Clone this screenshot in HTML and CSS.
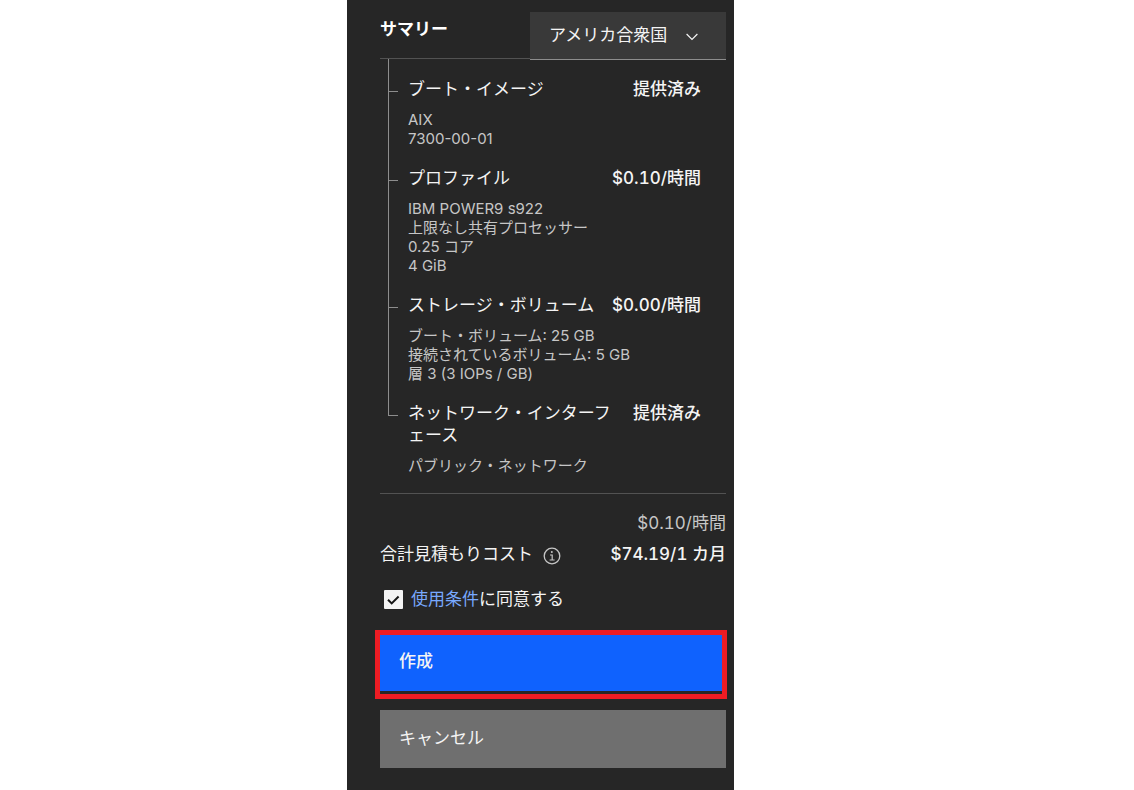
FILE: index.html
```
<!DOCTYPE html>
<html lang="ja">
<head>
<meta charset="utf-8">
<meta name="viewport" content="width=device-width, initial-scale=1">
<title>サマリー</title>
<link rel="stylesheet" href="styles.css">
</head>
<body>
<aside class="summary">
  <header class="summary-header">
    <h1 class="summary-title">サマリー</h1>
    <div class="region">
      <select class="region-select" aria-label="国">
        <option>アメリカ合衆国</option>
      </select>
      <svg class="region-chevron" viewBox="0 0 12 8" aria-hidden="true"><path d="M.6 1 6 6.4 11.4 1" fill="none" stroke="currentColor" stroke-width="1.2"/></svg>
    </div>
  </header>

  <ul class="tree">
    <li class="item">
      <span class="rail"></span>
      <div class="item-body">
        <div class="item-head"><h2 class="item-name">ブート・イメージ</h2><span class="item-price">提供済み</span></div>
        <p class="detail">AIX</p>
        <p class="detail">7300-00-01</p>
      </div>
    </li>
    <li class="item">
      <span class="rail"></span>
      <div class="item-body">
        <div class="item-head"><h2 class="item-name">プロファイル</h2><span class="item-price">$0.10/時間</span></div>
        <p class="detail">IBM POWER9 s922</p>
        <p class="detail">上限なし共有プロセッサー</p>
        <p class="detail">0.25 コア</p>
        <p class="detail">4 GiB</p>
      </div>
    </li>
    <li class="item">
      <span class="rail"></span>
      <div class="item-body">
        <div class="item-head"><h2 class="item-name">ストレージ・ボリューム</h2><span class="item-price">$0.00/時間</span></div>
        <p class="detail">ブート・ボリューム: 25 GB</p>
        <p class="detail">接続されているボリューム: 5 GB</p>
        <p class="detail">層 3 (3 IOPs / GB)</p>
      </div>
    </li>
    <li class="item">
      <span class="rail"></span>
      <div class="item-body">
        <div class="item-head"><h2 class="item-name">ネットワーク・インターフェース</h2><span class="item-price">提供済み</span></div>
        <p class="detail">パブリック・ネットワーク</p>
      </div>
    </li>
  </ul>

  <section class="total">
    <p class="hourly">$0.10/時間</p>
    <div class="total-row">
      <span>合計見積もりコスト</span>
      <button class="info" type="button" aria-label="詳細">
        <svg class="info-icon" viewBox="0 0 18 18" aria-hidden="true"><circle cx="9" cy="9" r="7.8" fill="none" stroke="currentColor" stroke-width="1.3"/><circle cx="8.8" cy="5" r="1" fill="currentColor"/><path d="M7 8h2.2v5M6.6 13h5" fill="none" stroke="currentColor" stroke-width="1.2"/></svg>
      </button>
      <strong class="monthly">$74.19/1 カ月</strong>
    </div>
  </section>

  <div class="terms">
    <input class="terms-box" type="checkbox" id="agree" checked>
    <label for="agree"><a class="terms-link" href="#terms">使用条件</a>に同意する</label>
  </div>

  <div class="highlight"><button class="button primary" type="button">作成</button></div>
  <button class="button secondary" type="button">キャンセル</button>
</aside>
</body>
</html>
```
FILE: styles.css
```
* {
  box-sizing: border-box;
}

body {
  margin: 0;
  background: #fff;
  font-family: Inter, "Noto Sans CJK JP", sans-serif;
  font-size: 17px;
  line-height: 22px;
}

h1, h2, p, ul {
  margin: 0;
  padding: 0;
  font-size: inherit;
}

button, select {
  border: 0;
  border-radius: 0;
  font: inherit;
  color: inherit;
}

.summary {
  max-width: 387px;
  min-height: 100vh;
  margin-left: 347px;
  padding: 12px 8px 22px 33px;
  background: #262626;
  color: #f4f4f4;
}

.summary-header {
  display: flex;
  justify-content: space-between;
  height: 47px;
  border-bottom: 1px solid #525252;
}

.summary-title {
  padding-top: 6px;
  font-weight: 700;
  color: #fff;
}

.region {
  position: relative;
  width: 196px;
  height: 48px;
}

.region-select {
  appearance: none;
  width: 100%;
  height: 100%;
  padding: 0 48px 2px 19px;
  border-bottom: 1px solid #8d8d8d;
  background: #393939;
}

.region-chevron {
  position: absolute;
  top: 21px;
  right: 28px;
  width: 12px;
  height: 8px;
  pointer-events: none;
}

.tree {
  margin-left: 8px;
  list-style: none;
}

.item {
  display: flex;
  gap: 10px;
}

.rail {
  display: flex;
  flex-direction: column;
  width: 10px;
}

.rail::before {
  content: "";
  height: 32px;
  border-left: 1px solid #8d8d8d;
  border-bottom: 1px solid #8d8d8d;
}

.rail::after {
  content: "";
  flex: 1;
  border-left: 1px solid #8d8d8d;
}

.item:last-child .rail::after {
  border-left: 0;
}

.item-body {
  flex: 1;
  padding-top: 19px;
}

.item-head {
  display: flex;
  gap: 8px;
  margin-bottom: 10px;
  padding-right: 25px;
}

.item-name {
  flex: 1;
  font-weight: 400;
  line-break: anywhere;
}

.item-price {
  font-weight: 500;
  font-variant-numeric: tabular-nums;
  white-space: nowrap;
}

.detail {
  font-size: 15px;
  line-height: 19px;
  color: #c6c6c6;
}

.total {
  margin-top: 18px;
  padding-top: 18px;
  border-top: 1px solid #525252;
  font-variant-numeric: tabular-nums;
}

.hourly {
  text-align: right;
  color: #c6c6c6;
}

.total-row {
  display: flex;
  align-items: center;
  margin-top: 9px;
}

.info {
  display: flex;
  margin-left: 10px;
  padding: 3px 0 0;
  background: none;
  color: #c6c6c6;
}

.info-icon {
  width: 18px;
  height: 18px;
}

.monthly {
  margin-left: auto;
  font-weight: 500;
}

.terms {
  display: flex;
  align-items: center;
  gap: 8px;
  margin: 23px 0 20px 4px;
}

.terms-box {
  appearance: none;
  width: 19px;
  height: 19px;
  margin: 0;
  border-radius: 1px;
  background: #f4f4f4 url("data:image/svg+xml,%3Csvg xmlns='http://www.w3.org/2000/svg' viewBox='0 0 19 19'%3E%3Cpath d='M4 9.7 7.7 13.4 14.6 6.5' fill='none' stroke='%23161616' stroke-width='2'/%3E%3C/svg%3E");
}

.terms-link {
  color: #78a9ff;
  text-decoration: none;
}

.highlight {
  margin: 0 -1px 11px -5px;
  padding-bottom: 3px;
  border: 5px solid #ed1c24;
}

.button {
  display: block;
  width: 100%;
  padding: 15px 19px 19px;
  text-align: left;
}

.primary {
  background: #0f62fe;
  font-weight: 500;
}

.secondary {
  padding: 17px 19px 19px;
  background: #6f6f6f;
}
```
